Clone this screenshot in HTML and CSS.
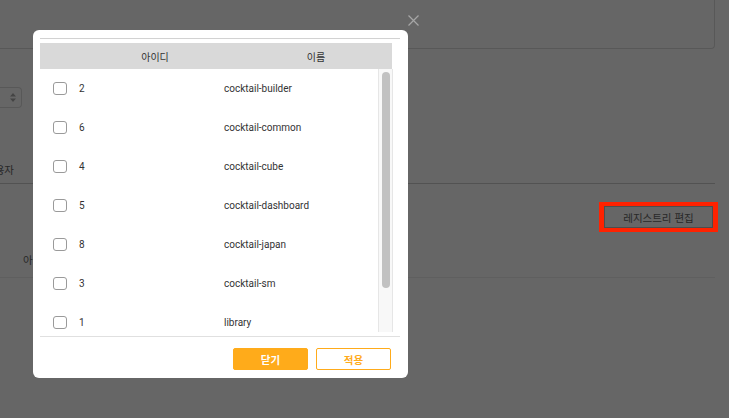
FILE: index.html
```html
<!DOCTYPE html>
<html lang="ko">
<head>
<meta charset="utf-8">
<title>레지스트리 편집</title>
<link rel="stylesheet" href="styles.css">
</head>
<body>
<div class="page">
  <div class="top-box"></div>
  <div class="filter">
    <div class="select">
      <svg class="select-arrows" width="6" height="9" viewBox="0 0 6 9"><path d="M3 0 L6 3.5 H0 Z M3 9 L6 5.5 H0 Z" fill="#aaa"/></svg>
    </div>
  </div>
  <div class="tabs"><span class="tab-label">사용자</span></div>
  <div class="toolbar"><button class="edit-btn">레지스트리 편집</button></div>
  <div class="bg-head"><span>아이디</span></div>
</div>

<div class="overlay"></div>

<div class="modal">
  <svg class="close" width="11" height="11" viewBox="0 0 11 11"><path d="M0.5 0.5 L10.5 10.5 M10.5 0.5 L0.5 10.5" stroke="#a6a6a6" stroke-width="1.2"/></svg>
  <div class="rule-top"></div>
  <div class="table">
    <div class="thead">
      <span></span>
      <span>아이디</span>
      <span>이름</span>
    </div>
    <div class="tbody">
      <div class="rows">
        <div class="row"><span class="cb"></span><span>2</span><span>cocktail-builder</span></div>
        <div class="row"><span class="cb"></span><span>6</span><span>cocktail-common</span></div>
        <div class="row"><span class="cb"></span><span>4</span><span>cocktail-cube</span></div>
        <div class="row"><span class="cb"></span><span>5</span><span>cocktail-dashboard</span></div>
        <div class="row"><span class="cb"></span><span>8</span><span>cocktail-japan</span></div>
        <div class="row"><span class="cb"></span><span>3</span><span>cocktail-sm</span></div>
        <div class="row"><span class="cb"></span><span>1</span><span>library</span></div>
      </div>
      <div class="scrollbar"><div class="thumb"></div></div>
    </div>
  </div>
  <div class="rule-bottom"></div>
  <div class="footer">
    <button class="btn btn-primary">닫기</button>
    <button class="btn btn-outline">적용</button>
  </div>
</div>
</body>
</html>
```
FILE: styles.css
```css
html, body {
  margin: 0;
  padding: 0;
}
body {
  font-family: "Roboto", "Noto Sans CJK KR", sans-serif;
  font-size: 10px;
  color: #333;
  background: #fff;
}
.page {
  width: 729px;
  height: 418px;
  overflow: hidden;
  background: #fff;
}
.top-box {
  box-sizing: border-box;
  width: 715px;
  height: 49px;
  border-right: 1px solid #dcdcdc;
  border-bottom: 1px solid #dcdcdc;
  border-bottom-right-radius: 4px;
}
.filter {
  margin-top: 38px;
  height: 21px;
}
.select {
  box-sizing: border-box;
  width: 22px;
  height: 21px;
  border: 1px solid #dcdcdc;
  border-left: none;
  border-radius: 0 4px 4px 0;
  display: flex;
  align-items: center;
  justify-content: flex-end;
  padding-right: 5px;
}
.select-arrows {
  display: block;
}
.tabs {
  margin-top: 47px;
  width: 715px;
  height: 28px;
  border-bottom: 1px solid #cecece;
  display: flex;
  align-items: center;
}
.tab-label {
  margin-left: -15px;
  font-family: "Noto Sans CJK KR", sans-serif;
  font-size: 10.5px;
  color: #666;
}
.toolbar {
  width: 715px;
  display: flex;
  justify-content: flex-end;
  padding-top: 22px;
}
.edit-btn {
  position: relative;
  box-sizing: border-box;
  width: 109px;
  height: 22px;
  margin: 0 2px 0 0;
  padding: 0;
  background: #fff;
  border: 1px solid #c0c0c0;
  font-family: "Noto Sans CJK KR", sans-serif;
  font-size: 10.5px;
  color: #666;
}
.edit-btn::after {
  content: "";
  position: absolute;
  top: -5px;
  bottom: -5px;
  left: -6px;
  right: -6px;
  border-style: solid;
  border-color: #ff2200;
  border-width: 4px 5px;
  z-index: 20;
}
.bg-head {
  margin-top: 14px;
  box-sizing: border-box;
  width: 715px;
  height: 36px;
  border-bottom: 1px solid #eeeeee;
  padding-left: 23px;
  display: flex;
  align-items: center;
  font-family: "Noto Sans CJK KR", sans-serif;
  font-size: 10.5px;
  color: #666;
}
.overlay {
  position: fixed;
  inset: 0;
  background: rgba(0, 0, 0, 0.6);
  z-index: 10;
}
.modal {
  position: fixed;
  left: 33px;
  top: 30px;
  width: 375px;
  box-sizing: border-box;
  padding: 8px 8px 8px 7px;
  background: #fff;
  border-radius: 6px;
  z-index: 11;
}
.close {
  position: absolute;
  top: -15px;
  right: -11px;
  display: block;
}
.rule-top {
  width: 360px;
  border-top: 1px solid #d2d2d2;
}
.table {
  margin-top: 4px;
  width: 353px;
}
.thead {
  display: grid;
  grid-template-columns: 30px 170px 1fr;
  height: 26px;
  width: 352px;
  align-items: center;
  background: #d9d9d9;
  font-family: "Noto Sans CJK KR", sans-serif;
  font-size: 10px;
  color: #333;
  text-align: center;
}
.tbody {
  display: flex;
  height: 263px;
}
.rows {
  flex: 1;
  overflow: hidden;
}
.row {
  display: grid;
  grid-template-columns: 39px 145px 1fr;
  align-items: center;
  height: 39px;
  color: #333;
}
.cb {
  box-sizing: border-box;
  width: 14px;
  height: 13px;
  margin-left: 13px;
  border: 1px solid #9a9a9a;
  border-radius: 3px;
  background: #fff;
}
.scrollbar {
  box-sizing: border-box;
  width: 15px;
  height: 263px;
  background: #f8f8f8;
  border-left: 1px solid #e6e6e6;
  border-right: 1px solid #e6e6e6;
  padding: 3px 2px 0 3px;
}
.thumb {
  height: 216px;
  border-radius: 4px;
  background: #c1c1c1;
}
.rule-bottom {
  margin-top: 4px;
  width: 360px;
  border-top: 1px solid #e0e0e0;
}
.footer {
  width: 360px;
  display: flex;
  justify-content: flex-end;
  gap: 8px;
  padding-top: 11px;
}
.btn {
  box-sizing: border-box;
  width: 75px;
  height: 22px;
  margin: 0 9px 0 0;
  padding: 0;
  border-radius: 2px;
  font-family: "Noto Sans CJK KR", sans-serif;
  font-size: 10.5px;
  font-weight: 700;
}
.btn-primary {
  margin-right: 0;
  background: #ffab1a;
  border: 1px solid #ffab1a;
  color: #fff;
}
.btn-outline {
  background: #fff;
  border: 1px solid #ffab1a;
  color: #ffab1a;
}
```
